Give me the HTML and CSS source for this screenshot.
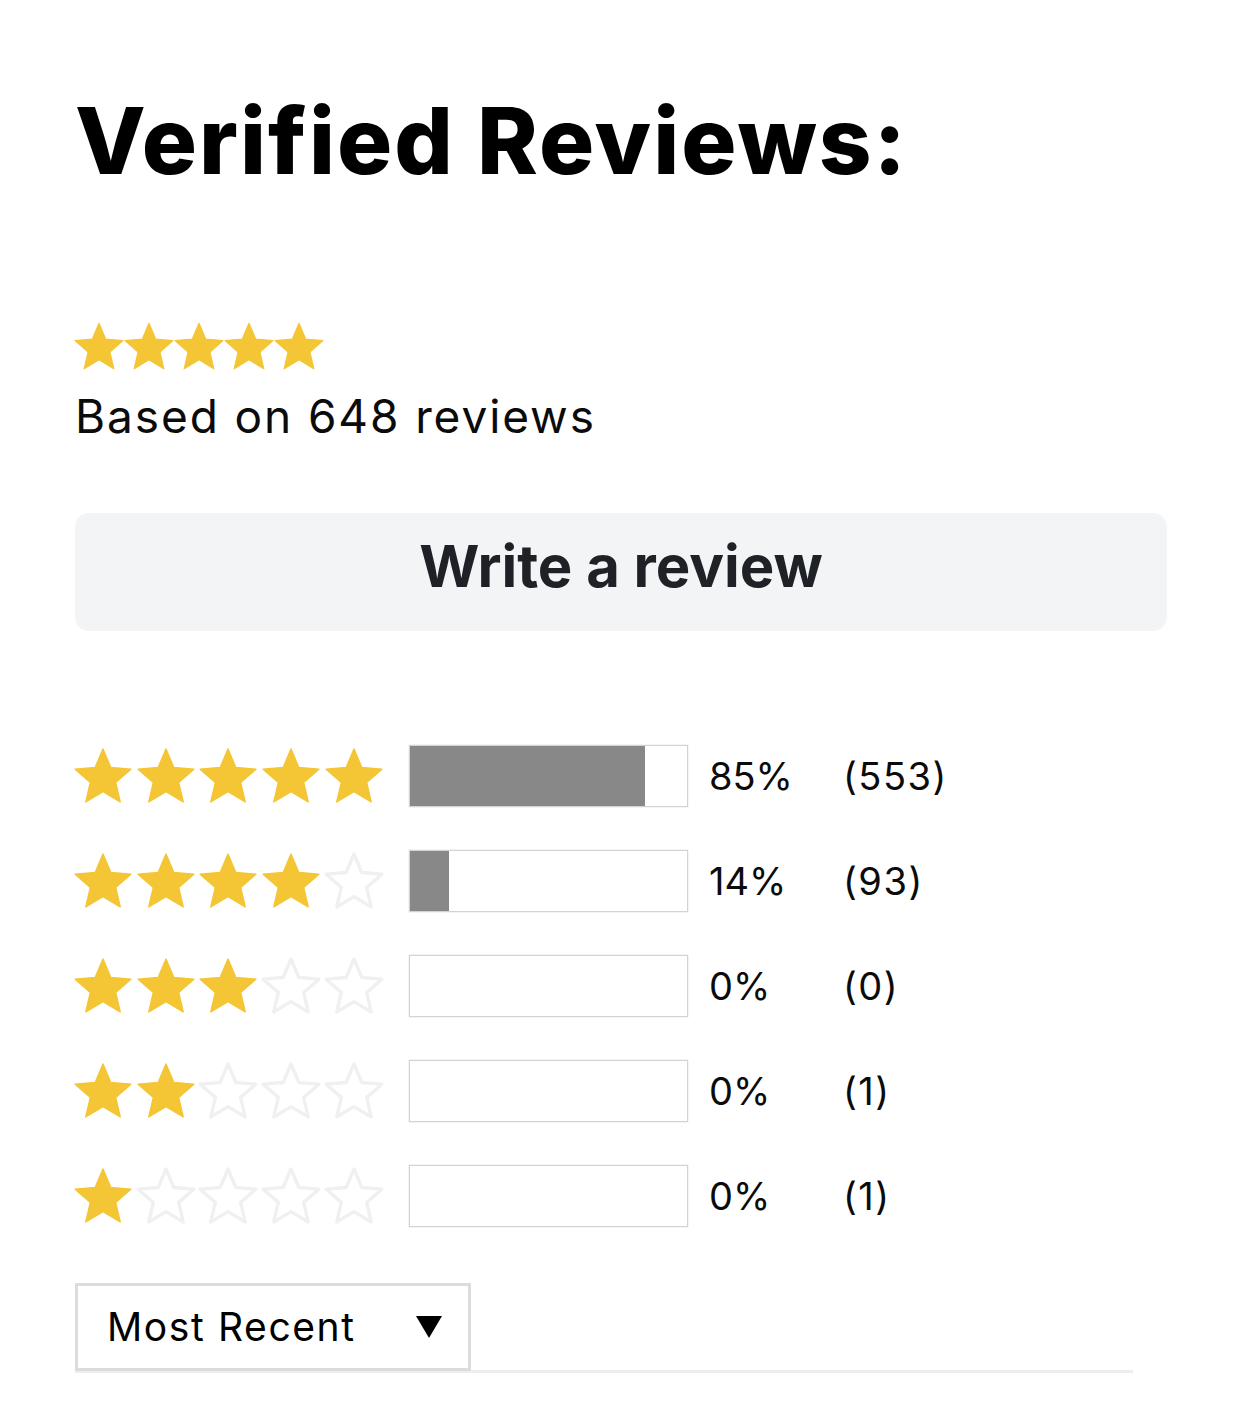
FILE: index.html
```html
<!DOCTYPE html>
<html lang="en">
<head>
<meta charset="utf-8">
<title>Verified Reviews</title>
<link rel="stylesheet" href="styles.css">
</head>
<body>
<svg width="0" height="0" class="defs" aria-hidden="true">
  <defs>
    <path id="star" d="M12 17.27L18.18 21l-1.64-7.03L22 9.24l-7.19-.61L12 2 9.19 8.63 2 9.24l5.46 4.73L5.82 21z"/>
  </defs>
</svg>
<main class="reviews">
  <h1 class="title">Verified Reviews:</h1>

  <div class="summary-stars">
    <svg class="s-star" viewBox="2 2 20 19"><use href="#star"/></svg>
    <svg class="s-star" viewBox="2 2 20 19"><use href="#star"/></svg>
    <svg class="s-star" viewBox="2 2 20 19"><use href="#star"/></svg>
    <svg class="s-star" viewBox="2 2 20 19"><use href="#star"/></svg>
    <svg class="s-star" viewBox="2 2 20 19"><use href="#star"/></svg>
  </div>
  <p class="based">Based on 648 reviews</p>

  <button class="write-btn" type="button">Write a review</button>

  <div class="breakdown">
    <div class="row">
      <div class="stars">
        <svg class="r-star on" viewBox="2 2 20 19"><use href="#star"/></svg>
        <svg class="r-star on" viewBox="2 2 20 19"><use href="#star"/></svg>
        <svg class="r-star on" viewBox="2 2 20 19"><use href="#star"/></svg>
        <svg class="r-star on" viewBox="2 2 20 19"><use href="#star"/></svg>
        <svg class="r-star on" viewBox="2 2 20 19"><use href="#star"/></svg>
      </div>
      <div class="bar"><div class="fill" style="width:85%"></div></div>
      <span class="pct">85%</span>
      <span class="count">(553)</span>
    </div>
    <div class="row">
      <div class="stars">
        <svg class="r-star on" viewBox="2 2 20 19"><use href="#star"/></svg>
        <svg class="r-star on" viewBox="2 2 20 19"><use href="#star"/></svg>
        <svg class="r-star on" viewBox="2 2 20 19"><use href="#star"/></svg>
        <svg class="r-star on" viewBox="2 2 20 19"><use href="#star"/></svg>
        <svg class="r-star off" viewBox="2 2 20 19"><use href="#star"/></svg>
      </div>
      <div class="bar"><div class="fill" style="width:14%"></div></div>
      <span class="pct">14%</span>
      <span class="count">(93)</span>
    </div>
    <div class="row">
      <div class="stars">
        <svg class="r-star on" viewBox="2 2 20 19"><use href="#star"/></svg>
        <svg class="r-star on" viewBox="2 2 20 19"><use href="#star"/></svg>
        <svg class="r-star on" viewBox="2 2 20 19"><use href="#star"/></svg>
        <svg class="r-star off" viewBox="2 2 20 19"><use href="#star"/></svg>
        <svg class="r-star off" viewBox="2 2 20 19"><use href="#star"/></svg>
      </div>
      <div class="bar"><div class="fill" style="width:0%"></div></div>
      <span class="pct">0%</span>
      <span class="count">(0)</span>
    </div>
    <div class="row">
      <div class="stars">
        <svg class="r-star on" viewBox="2 2 20 19"><use href="#star"/></svg>
        <svg class="r-star on" viewBox="2 2 20 19"><use href="#star"/></svg>
        <svg class="r-star off" viewBox="2 2 20 19"><use href="#star"/></svg>
        <svg class="r-star off" viewBox="2 2 20 19"><use href="#star"/></svg>
        <svg class="r-star off" viewBox="2 2 20 19"><use href="#star"/></svg>
      </div>
      <div class="bar"><div class="fill" style="width:0%"></div></div>
      <span class="pct">0%</span>
      <span class="count">(1)</span>
    </div>
    <div class="row">
      <div class="stars">
        <svg class="r-star on" viewBox="2 2 20 19"><use href="#star"/></svg>
        <svg class="r-star off" viewBox="2 2 20 19"><use href="#star"/></svg>
        <svg class="r-star off" viewBox="2 2 20 19"><use href="#star"/></svg>
        <svg class="r-star off" viewBox="2 2 20 19"><use href="#star"/></svg>
        <svg class="r-star off" viewBox="2 2 20 19"><use href="#star"/></svg>
      </div>
      <div class="bar"><div class="fill" style="width:0%"></div></div>
      <span class="pct">0%</span>
      <span class="count">(1)</span>
    </div>
  </div>

  <div class="toolbar">
    <div class="sort">
      <span class="sort-label">Most Recent</span>
      <svg class="caret" viewBox="0 0 26 22"><polygon points="0,0 26,0 13,22"/></svg>
    </div>
  </div>
</main>
</body>
</html>
```

FILE: styles.css
```css
html, body {
  margin: 0;
  padding: 0;
  background: #ffffff;
}

body {
  font-family: "Inter", "Liberation Sans", sans-serif;
  color: #000000;
  font-variant-ligatures: none;
}

.defs {
  position: absolute;
  width: 0;
  height: 0;
  overflow: hidden;
}

.reviews {
  padding: 86px 0 0 75px;
  display: flex;
  flex-direction: column;
  align-items: flex-start;
}

.title {
  margin: 0;
  font-size: 92px;
  font-weight: 800;
  letter-spacing: 2px;
  line-height: 1.2;
  color: #000;
}

.summary-stars {
  margin-top: 127px;
  display: flex;
  gap: 2px;
}

.s-star {
  display: block;
  width: 48px;
  height: 46px;
  overflow: visible;
  fill: #f4c534;
  stroke: #f4c534;
  stroke-width: 0.5;
  stroke-linejoin: round;
}

.based {
  margin: 20px 0 0;
  font-size: 46px;
  letter-spacing: 1.9px;
  line-height: 1.2;
  font-weight: 400;
  color: #0b0b0b;
}

.write-btn {
  margin-top: 68px;
  width: 1092px;
  height: 118px;
  padding: 0 0 9px;
  border: none;
  border-radius: 14px;
  background: #f3f4f6;
  color: #1e2226;
  font-family: inherit;
  font-size: 58px;
  font-weight: 700;
  line-height: 1.2;
  display: flex;
  align-items: center;
  justify-content: center;
}

.breakdown {
  margin-top: 114px;
  display: flex;
  flex-direction: column;
  gap: 43px;
}

.row {
  display: grid;
  grid-template-columns: 308px 305px 155px auto;
  align-items: center;
  height: 62px;
}

.stars {
  display: flex;
  gap: 6.7px;
}

.r-star {
  display: block;
  width: 56px;
  height: 53px;
  overflow: visible;
  stroke-linejoin: round;
}

.r-star.on {
  fill: #f4c534;
  stroke: #f4c534;
  stroke-width: 0.5;
}

.r-star.off {
  fill: none;
  stroke: #f0f0f1;
  stroke-width: 1.2;
}

.bar {
  justify-self: end;
  width: 279px;
  height: 62px;
  box-sizing: border-box;
  border: 1px solid #d3d3d3;
  box-shadow: 0 0 1px rgba(0, 0, 0, 0.25);
  background: #ffffff;
}

.fill {
  height: 100%;
  background: #888888;
}

.pct, .count {
  font-size: 38px;
  line-height: 1;
  color: #0b0b0b;
}

.pct {
  padding-left: 21px;
}

.count {
  letter-spacing: 1.5px;
}

.toolbar {
  margin-top: 56px;
  width: 1058px;
  border-bottom: 3px solid #ededed;
}

.sort {
  box-sizing: border-box;
  width: 396px;
  height: 88px;
  border: 3px solid #dcdcdc;
  background: #fff;
  padding: 0 26px 0 29px;
  display: flex;
  align-items: center;
  justify-content: space-between;
  margin-bottom: -1px;
}

.sort-label {
  font-size: 39px;
  letter-spacing: 1.6px;
  line-height: 1;
  color: #000;
}

.caret {
  display: block;
  width: 26px;
  height: 22px;
  fill: #000;
}
```
